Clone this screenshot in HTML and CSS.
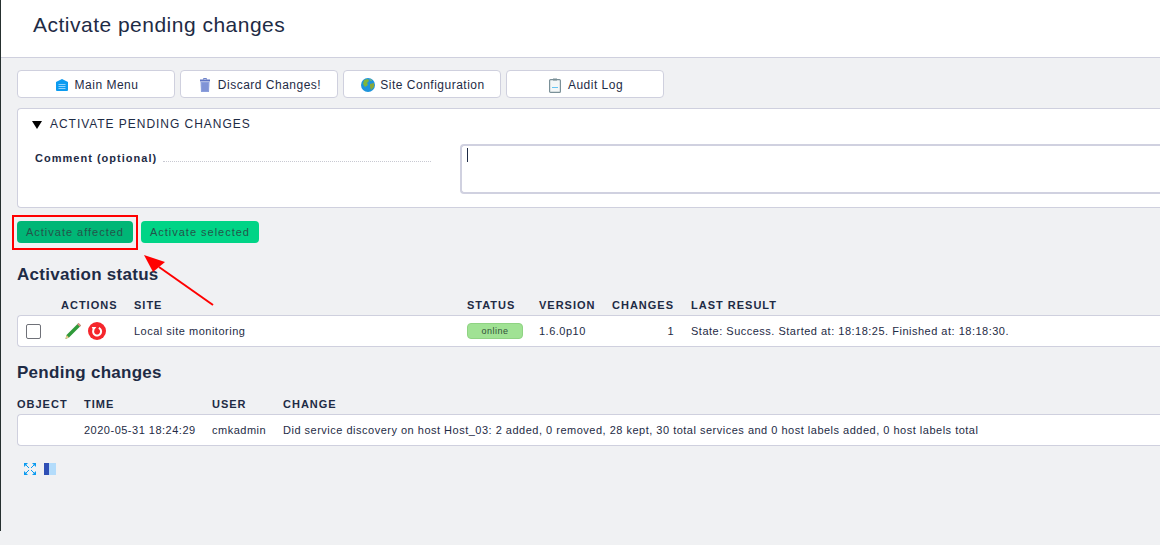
FILE: index.html
```html
<!DOCTYPE html>
<html lang="en">
<head>
    <meta charset="UTF-8">
    <title>Activate pending changes</title>
    <link rel="stylesheet" href="styles.css">
</head>
<body>
    <div class="edge"></div>
    <div class="page">
        <div class="titlebar">
            <h1>Activate pending changes</h1>
        </div>

        <div class="content">
            <div class="toolbar">
                <a class="tool">
                    <svg width="12" height="12" viewBox="0 0 12 12"><path d="M6 0 L12 3 V11 Q12 12 11 12 H1 Q0 12 0 11 V3 Z" fill="#0b9bf0"/><path d="M2.5 5.5H9.5M2.5 7.5H9.5M2.5 9.5H9.5" stroke="#8fd3ff" stroke-width="1"/></svg>
                    Main Menu
                </a>
                <a class="tool">
                    <svg width="12" height="14" viewBox="0 0 12 14"><path d="M4.5 1.5 V0.5 H7.5 V1.5" fill="none" stroke="#6f83c9"/><rect x="1" y="1.5" width="10" height="2" fill="#5f75c4"/><path d="M1.5 4 H10.5 L10 14 H2 Z" fill="#8c9fdc"/><path d="M4 5V13M6 5V13M8 5V13" stroke="#7488d0" stroke-width="1"/></svg>
                    Discard Changes!
                </a>
                <a class="tool">
                    <svg class="globe" width="14" height="14" viewBox="0 0 14 14"><circle cx="7" cy="7" r="7" fill="#1d94dc"/><path d="M3 2 L7 1 L8 3 L6 5 L7 7 L4 9 L2 6 Z" fill="#7fb53c"/><path d="M9 6 L13 5 L13 9 L10 12 L9 9 Z" fill="#8aa83a"/><path d="M8 1 L11 2 L10 3 Z" fill="#a7c23f"/></svg>
                    Site Configuration
                </a>
                <a class="tool">
                    <svg width="12" height="15" viewBox="0 0 12 15"><rect x="0.6" y="1.6" width="10.8" height="12.8" rx="1" fill="#f4f7f7" stroke="#7a9098" stroke-width="1.2"/><rect x="4" y="0.5" width="4" height="2" fill="#7a9098"/><rect x="3" y="9" width="6" height="1" fill="#66c4f2"/></svg>
                    Audit Log
                </a>
            </div>

            <div class="panel">
                <div class="panel_head"><span class="triangle"></span>ACTIVATE PENDING CHANGES</div>
                <div class="panel_row">
                    <div class="legend">
                        <b>Comment (optional)</b>
                        <span class="dots"></span>
                    </div>
                    <div class="comment"><span class="caret"></span></div>
                </div>
            </div>

            <div class="actions">
                <a class="activate dark">Activate affected</a>
                <a class="activate">Activate selected</a>
            </div>

            <h2 class="status_title">Activation status</h2>
            <div class="heads status_cols">
                <span></span>
                <span>ACTIONS</span>
                <span>SITE</span>
                <span>STATUS</span>
                <span>VERSION</span>
                <span>CHANGES</span>
                <span>LAST RESULT</span>
            </div>
            <div class="row status_row">
                <span><span class="check"></span></span>
                <span class="row_icons">
                    <svg width="18" height="18" viewBox="0 0 18 18"><path d="M14.5 1 L17 3.5 L5 15.5 L1.5 17 L2.5 13 Z" fill="#2f9a3a"/><path d="M14.5 1 L17 3.5 L15.8 4.7 L13.3 2.2 Z" fill="#e88a8a"/><path d="M2.5 13 L5 15.5 L1.5 17 Z" fill="#e8c98a"/></svg>
                    <svg width="18" height="18" viewBox="0 0 18 18"><circle cx="9" cy="9" r="9" fill="#f5262c"/><path d="M10.8 5.9 A4 4 0 1 1 5.6 7.6" fill="none" stroke="#fff" stroke-width="2"/><path d="M3.8 5 H8.4 L5.4 9 Z" fill="#fff"/></svg>
                </span>
                <span>Local site monitoring</span>
                <span><span class="online">online</span></span>
                <span>1.6.0p10</span>
                <span class="num">1</span>
                <span>State: Success. Started at: 18:18:25. Finished at: 18:18:30.</span>
            </div>

            <h2 class="pending_title">Pending changes</h2>
            <div class="heads pending_cols">
                <span>OBJECT</span>
                <span>TIME</span>
                <span>USER</span>
                <span>CHANGE</span>
            </div>
            <div class="row pending_row">
                <span></span>
                <span>2020-05-31 18:24:29</span>
                <span>cmkadmin</span>
                <span>Did service discovery on host Host_03: 2 added, 0 removed, 28 kept, 30 total services and 0 host labels added, 0 host labels total</span>
            </div>

            <div class="foot_icons">
                <svg width="12" height="12" viewBox="0 0 12 12" fill="#0b9bf0"><path d="M0 0H4L0 4ZM12 0V4L8 0ZM0 12V8L4 12ZM12 12H8L12 8Z"/><path d="M2 2L5 5M10 2L7 5M2 10L5 7M10 10L7 7" stroke="#0b9bf0" stroke-width="1"/></svg>
                <svg width="12" height="12" viewBox="0 0 12 12"><rect width="12" height="12" fill="#b3dcfb"/><rect width="5" height="12" fill="#2f4fb5"/></svg>
            </div>
        </div>
    </div>

    <!-- annotation drawn over the screenshot -->
    <div class="mark"></div>
    <svg class="arrow" width="80" height="60" viewBox="0 0 80 60"><path d="M72 50 L18 12" stroke="#f00" stroke-width="2"/><path d="M3 0 L24 7 L12 17 Z" fill="#f00"/></svg>
</body>
</html>
```

FILE: styles.css
```css
html, body {
    margin: 0;
    height: 100%;
    overflow: hidden;
}

body {
    display: flex;
    font-family: "Liberation Sans", Arial, sans-serif;
    font-size: 11px;
    color: #1e2b45;
    background: #f0f1f3;
    position: relative;
}

.edge {
    width: 1px;
    height: 531px;
    flex: none;
    background: #26302f;
}

.page {
    flex: 1;
    min-width: 0;
}

/* Title */
.titlebar {
    height: 57px;
    background: #fff;
    border-bottom: 1px solid #cfd0de;
    padding-left: 32px;
}

h1 {
    margin: 0;
    padding-top: 12px;
    font-size: 21px;
    line-height: 25px;
    font-weight: normal;
    letter-spacing: 0.49px;
}

.content {
    padding: 12px 0 0 16px;
}

/* Buttons */
.toolbar {
    display: flex;
    gap: 5px;
}

.tool {
    width: 158px;
    height: 28px;
    box-sizing: border-box;
    display: flex;
    align-items: center;
    justify-content: center;
    gap: 7px;
    padding: 2px 0 0 2px;
    background: #fff;
    border: 1px solid #cfd0de;
    border-radius: 4px;
    font-size: 12px;
    letter-spacing: 0.5px;
}

.globe {
    margin-right: -2px;
}

/* Comment box */
.panel {
    margin-top: 10px;
    height: 100px;
    box-sizing: border-box;
    background: #fff;
    border: 1px solid #cfd0de;
    border-right: none;
    border-radius: 4px 0 0 4px;
}

.panel_head {
    display: flex;
    align-items: center;
    height: 29px;
    padding-left: 14px;
    font-size: 12px;
    letter-spacing: 0.96px;
}

.triangle {
    width: 0;
    height: 0;
    margin: 3px 8px 0 0;
    border-left: 5px solid transparent;
    border-right: 5px solid transparent;
    border-top: 8px solid #000;
}

.panel_row {
    display: flex;
    padding-top: 6px;
}

.legend {
    width: 396px;
    margin-left: 17px;
    margin-right: 29px;
    display: flex;
    align-items: flex-end;
    padding-top: 6px;
    height: 14px;
    gap: 6px;
    letter-spacing: 1.02px;
}

.legend b {
    white-space: nowrap;
}

.dots {
    flex: 1;
    border-bottom: 1px dotted #c8c9d2;
    margin-bottom: 2px;
}

.comment {
    flex: 1;
    height: 50px;
    box-sizing: border-box;
    background: #fff;
    border: 2px solid #d0d1e0;
    border-right: none;
    border-radius: 4px 0 0 4px;
    padding: 2px 5px;
}

.caret {
    display: block;
    width: 1px;
    height: 14px;
    background: #1e2b45;
}

/* Activate buttons */
.actions {
    display: flex;
    gap: 8px;
    margin-top: 13px;
}

.activate {
    height: 22px;
    line-height: 22px;
    padding: 0 9px;
    background: #00d486;
    border-radius: 4px;
    color: #24544a;
    letter-spacing: 0.99px;
}

.activate.dark {
    background: #00b676;
}

.mark {
    position: absolute;
    left: 12px;
    top: 215px;
    width: 122px;
    height: 31px;
    border: 2px solid #f00;
}

.arrow {
    position: absolute;
    left: 141px;
    top: 255px;
}

/* Tables */
h2 {
    margin: 0;
    font-size: 17px;
    line-height: 20px;
    letter-spacing: 0.27px;
}

.status_title {
    margin-top: 22px;
}

.pending_title {
    margin-top: 16px;
}

.heads {
    display: grid;
    height: 18px;
    align-items: center;
    font-weight: bold;
    letter-spacing: 1px;
}

.status_title + .heads {
    margin: 11px 0 1px;
}

.pending_title + .heads {
    margin: 12px 0 1px;
}

.row {
    display: grid;
    align-items: center;
    height: 32px;
    box-sizing: border-box;
    background: #fff;
    border: 1px solid #cfd0de;
    border-right: none;
    border-radius: 4px 0 0 4px;
    letter-spacing: 0.5px;
    white-space: nowrap;
}

.status_cols {
    grid-template-columns: 44px 73px 333px 72px 73px 79px 1fr;
}

.status_row {
    grid-template-columns: 43px 73px 333px 72px 73px 79px 1fr;
}

.pending_cols {
    grid-template-columns: 67px 128px 71px 1fr;
}

.pending_row {
    grid-template-columns: 66px 128px 71px 1fr;
}

.check {
    display: block;
    width: 15px;
    height: 15px;
    box-sizing: border-box;
    margin-left: 8px;
    background: #fff;
    border: 1px solid #6f7178;
    border-radius: 2px;
}

.row_icons {
    display: flex;
    align-items: center;
    gap: 6px;
    margin-left: 3px;
}

.online {
    display: block;
    width: 56px;
    height: 16px;
    line-height: 15px;
    box-sizing: border-box;
    text-align: center;
    font-size: 9px;
    background: #a0e294;
    border: 1px solid #8fd383;
    border-radius: 4px;
    color: #33513a;
    letter-spacing: 0.5px;
}

.num {
    text-align: right;
    padding-right: 17px;
}

.foot_icons {
    display: flex;
    gap: 8px;
    margin: 17px 0 0 7px;
}
```
